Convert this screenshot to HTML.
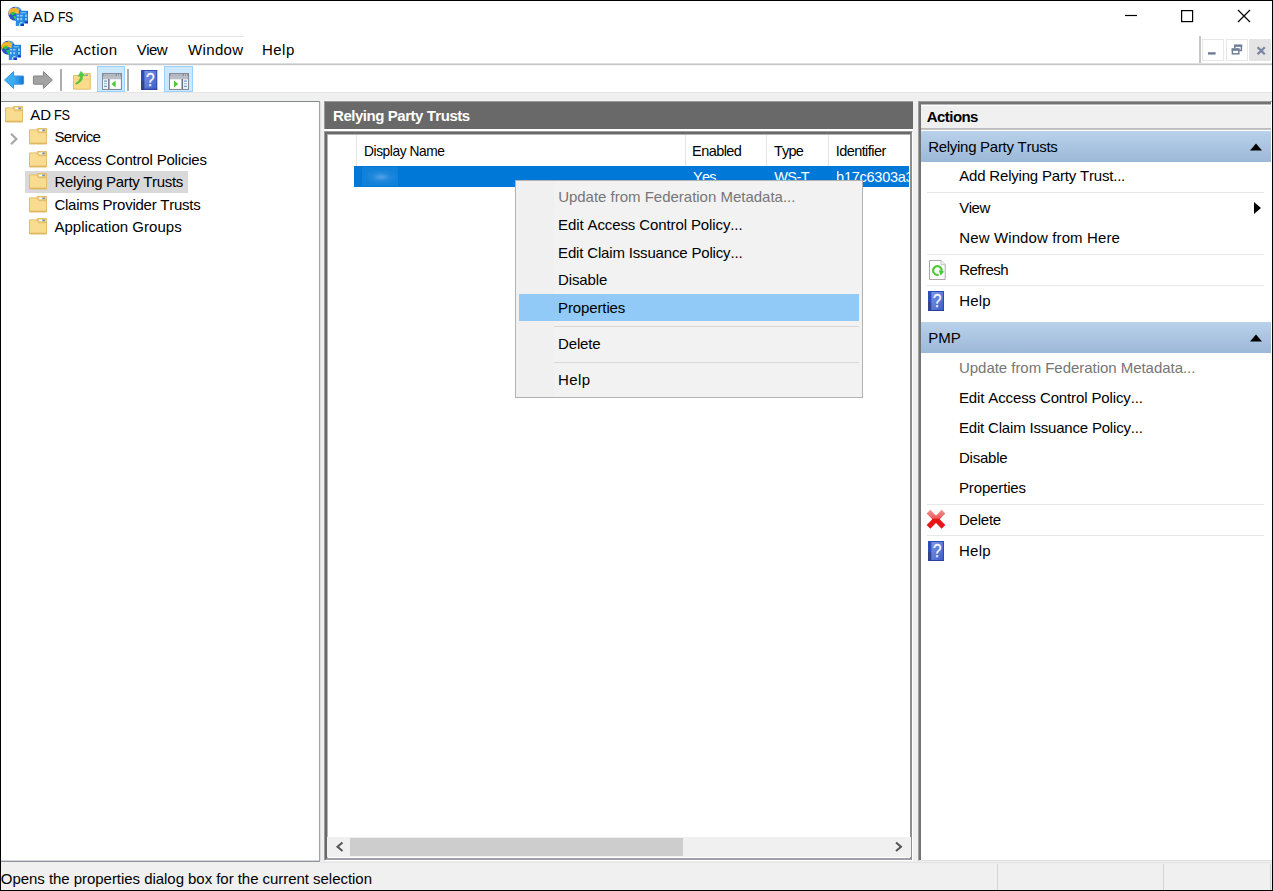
<!DOCTYPE html>
<html lang="en"><head><meta charset="utf-8"><title>AD FS</title>
<style>
html,body{margin:0;padding:0}
body{width:1273px;height:891px;position:relative;overflow:hidden;background:#fff;font-family:"Liberation Sans",sans-serif;}
.r{position:absolute}
.t{position:absolute;white-space:pre;line-height:20px;color:#000;font-kerning:none}
svg{position:absolute;overflow:visible}
</style></head>
<body>
<div class="r" style="left:0px;top:0px;width:1273px;height:891px;background:#fff;"></div>
<span class="t" style="left:32.77px;top:7px;font-size:15px;letter-spacing:0.610px;">AD <span style="display:inline-block;letter-spacing:-0.45px;margin-left:-1.61px;transform:scaleX(0.8155);transform-origin:0 0;">FS</span></span>
<svg style="left:1120px;top:5px" width="140" height="24" viewBox="1120 5 140 24"><path d="M1125 15.5H1137" stroke="#000" stroke-width="1.2" fill="none"/><rect x="1181.6" y="10.6" width="11" height="11" stroke="#000" stroke-width="1.2" fill="none"/><path d="M1238 10L1250 22M1250 10L1238 22" stroke="#000" stroke-width="1.2" fill="none"/></svg>
<div class="r" style="left:1px;top:36px;width:243px;height:1px;background:#e6e6e6;"></div>
<span class="t" style="left:29.47px;top:40px;font-size:15px;letter-spacing:-0.058px;">File</span>
<span class="t" style="left:73.17px;top:40px;font-size:15px;letter-spacing:0.443px;">Action</span>
<span class="t" style="left:136.83px;top:40px;font-size:15px;letter-spacing:-0.594px;">View</span>
<span class="t" style="left:187.93px;top:40px;font-size:15px;letter-spacing:0.376px;">Window</span>
<span class="t" style="left:262.07px;top:40px;font-size:15px;letter-spacing:0.437px;">Help</span>
<div class="r" style="left:1199px;top:36px;width:2px;height:28px;background:#c6c6c6;"></div>
<div class="r" style="left:1202px;top:39px;width:22px;height:22px;background:#fff;box-sizing:border-box;border:1px solid #e8e8e8"></div>
<div class="r" style="left:1226px;top:39px;width:22px;height:22px;background:#fff;box-sizing:border-box;border:1px solid #e8e8e8"></div>
<div class="r" style="left:1249px;top:39px;width:22px;height:22px;background:#e4e4e4;"></div>
<svg style="left:1200px;top:37px" width="72" height="26" viewBox="1200 37 72 26"><path d="M1208 53.4H1215.6" stroke="#6f7d99" stroke-width="2.4" fill="none"/><path d="M1234.8 48V45.6H1241.4V50.6H1239.4" stroke="#6f7d99" stroke-width="1.5" fill="none"/><path d="M1234 45.7H1242.2" stroke="#6f7d99" stroke-width="2.2" fill="none"/><rect x="1232.4" y="49.2" width="6.4" height="4.6" stroke="#6f7d99" stroke-width="1.5" fill="#fff"/><path d="M1231.7 49.6H1239.5" stroke="#6f7d99" stroke-width="2.4"/><path d="M1257.6 47.2L1264.8 54.2M1264.8 47.2L1257.6 54.2" stroke="#7685a3" stroke-width="2.3" fill="none"/></svg>
<div class="r" style="left:1px;top:63px;width:1271px;height:1px;background:#dedede;"></div>
<div class="r" style="left:1px;top:64px;width:1271px;height:1px;background:#c6c6c6;"></div>
<div class="r" style="left:1px;top:65px;width:1271px;height:1px;background:#f4f4f4;"></div>
<div class="r" style="left:97px;top:66px;width:28px;height:26px;background:#cce8ff;box-sizing:border-box;border:1px solid #99d1ff"></div>
<div class="r" style="left:164px;top:66px;width:29px;height:26px;background:#cce8ff;box-sizing:border-box;border:1px solid #99d1ff"></div>
<div class="r" style="left:60px;top:69px;width:2px;height:22px;background:#adadad;"></div>
<div class="r" style="left:127px;top:69px;width:2px;height:22px;background:#adadad;"></div>
<div class="r" style="left:1px;top:92px;width:1271px;height:10px;background:#f0f0f0;"></div>
<div class="r" style="left:1px;top:92px;width:1271px;height:1px;background:#e6e6e6;"></div>
<div class="r" style="left:320px;top:101px;width:5px;height:790px;background:#f0f0f0;"></div>
<div class="r" style="left:1px;top:101px;width:319px;height:761px;background:#fff;box-sizing:border-box;border-top:1px solid #828790;border-right:1px solid #a0a3a8;border-bottom:1px solid #8e9299"></div>
<div class="r" style="left:320px;top:102px;width:1px;height:760px;background:#dcdde0;"></div>
<div class="r" style="left:1px;top:860px;width:318px;height:1px;background:#d4d6da;"></div>
<div class="r" style="left:25px;top:171px;width:163px;height:22px;background:#d9d9d9;"></div>
<span class="t" style="left:30.17px;top:105px;font-size:15px;letter-spacing:0.110px;">AD <span style="display:inline-block;letter-spacing:-0.45px;margin-left:-1.55px;transform:scaleX(0.8513);transform-origin:0 0;">FS</span></span>
<span class="t" style="left:54.40px;top:127px;font-size:15px;letter-spacing:-0.575px;">Service</span>
<span class="t" style="left:54.40px;top:150px;font-size:15px;letter-spacing:-0.186px;">Access Control Policies</span>
<span class="t" style="left:54.40px;top:172px;font-size:15px;letter-spacing:-0.321px;">Relying Party Trusts</span>
<span class="t" style="left:54.40px;top:195px;font-size:15px;letter-spacing:-0.255px;">Claims Provider Trusts</span>
<span class="t" style="left:54.40px;top:217px;font-size:15px;letter-spacing:0.036px;">Application Groups</span>
<div class="r" style="left:324px;top:101px;width:590px;height:760px;background:#f0f0f0;"></div>
<div class="r" style="left:324px;top:101px;width:590px;height:28px;background:#696969;border-top:1px solid #9a9a9a;border-left:1px solid #9a9a9a;box-sizing:border-box"></div>
<span class="t" style="left:333.00px;top:106px;font-size:15px;letter-spacing:-0.456px;font-weight:bold;color:#fff;">Relying Party Trusts</span>
<div class="r" style="left:324px;top:129px;width:590px;height:2px;background:#fff;"></div>
<div class="r" style="left:324px;top:131px;width:589px;height:730px;background:#fff;box-sizing:border-box;border-top:1px solid #9c9c9c;border-left:1px solid #9c9c9c;border-right:1px solid #fff;border-bottom:1px solid #fff"></div>
<div class="r" style="left:325px;top:132px;width:587px;height:728px;background:#fff;box-sizing:border-box;border-top:2px solid #696969;border-left:2px solid #696969;border-right:2px solid #8e8e8e;border-bottom:2px solid #a0a0a8"></div>
<div class="r" style="left:327px;top:134px;width:583px;height:1px;background:#b4b4b4;"></div>
<div class="r" style="left:327px;top:134px;width:1px;height:724px;background:#b4b4b4;"></div>
<div class="r" style="left:356px;top:135px;width:1px;height:31px;background:#e5e5e5;"></div>
<div class="r" style="left:685px;top:135px;width:1px;height:31px;background:#e5e5e5;"></div>
<div class="r" style="left:766px;top:135px;width:1px;height:31px;background:#e5e5e5;"></div>
<div class="r" style="left:828px;top:135px;width:1px;height:31px;background:#e5e5e5;"></div>
<span class="t" style="left:363.57px;top:141px;font-size:14.5px;letter-spacing:-0.450px;transform:scaleX(0.9489);transform-origin:0 0;">Display Name</span>
<span class="t" style="left:692.11px;top:141px;font-size:14.5px;letter-spacing:-0.565px;">Enabled</span>
<span class="t" style="left:773.97px;top:141px;font-size:14.5px;letter-spacing:-0.789px;">Type</span>
<span class="t" style="left:835.66px;top:141px;font-size:14.5px;letter-spacing:-0.559px;">Identifier</span>
<div class="r" style="left:354px;top:166px;width:555px;height:21px;background:#0078d7;"></div>
<div class="r" style="left:362px;top:167px;width:36px;height:19px;background:radial-gradient(ellipse 17px 8px at 19px 10px,rgba(110,175,235,0.75) 0%,rgba(60,150,225,0.5) 55%,rgba(40,140,222,0.42) 100%)"></div>
<span class="t" style="left:692.98px;top:167px;font-size:14.5px;letter-spacing:-0.722px;color:#fff;">Yes</span>
<span class="t" style="left:774.24px;top:167px;font-size:14.5px;letter-spacing:-0.549px;color:#fff;">WS-T</span>
<div class="r" style="left:837px;top:166px;width:72px;height:21px;overflow:hidden">
<span class="t" style="left:-0.93px;top:1px;font-size:14.5px;letter-spacing:-0.251px;color:#fff;">b17c6303a3</span>
</div>
<div class="r" style="left:327px;top:837px;width:584px;height:20px;background:#f0f0f0;"></div>
<div class="r" style="left:350px;top:838px;width:333px;height:18px;background:#cdcdcd;"></div>
<svg style="left:330px;top:838px" width="580" height="18" viewBox="330 838 580 18"><path d="M342.5 842.5L337.5 846.7L342.5 851" stroke="#555" stroke-width="2" fill="none"/><path d="M896 842.5L901 846.7L896 851" stroke="#555" stroke-width="2" fill="none"/></svg>
<div class="r" style="left:913px;top:101px;width:5px;height:790px;background:#f0f0f0;"></div>
<div class="r" style="left:918px;top:101px;width:354px;height:760px;background:#fff;box-sizing:border-box;border-top:1px solid #a0a0a0;border-left:1px solid #a0a0a0;border-bottom:1px solid #e0e0e0"></div>
<div class="r" style="left:919px;top:102px;width:352px;height:758px;background:#fff;box-sizing:border-box;border-top:2px solid #737373;border-left:2px solid #737373"></div>
<div class="r" style="left:921px;top:104px;width:350px;height:1px;background:#b9b9b9;"></div>
<div class="r" style="left:921px;top:105px;width:350px;height:1px;background:#fff;"></div>
<div class="r" style="left:921px;top:106px;width:350px;height:22px;background:#f0f0f0;"></div>
<div class="r" style="left:921px;top:128px;width:350px;height:1px;background:#bcbcbc;"></div>
<div class="r" style="left:921px;top:129px;width:350px;height:1px;background:#c4c4c4;"></div>
<div class="r" style="left:921px;top:130px;width:350px;height:1px;background:#fff;"></div>
<span class="t" style="left:926.83px;top:107px;font-size:15px;letter-spacing:-0.569px;font-weight:bold;">Actions</span>
<div class="r" style="left:921px;top:131px;width:350px;height:31px;background:linear-gradient(#b9d1ea,#9cb8d8);"></div>
<span class="t" style="left:928.17px;top:137px;font-size:15px;letter-spacing:-0.282px;">Relying Party Trusts</span>
<svg style="left:1250px;top:142.7px" width="12" height="7.4" viewBox="0 0 12 7.4"><path d="M0 7.4L6 0.4L12 7.4Z" fill="#000"/></svg>
<div class="r" style="left:921px;top:322px;width:350px;height:31px;background:linear-gradient(#b9d1ea,#9cb8d8);"></div>
<span class="t" style="left:928.17px;top:328px;font-size:15px;letter-spacing:0.058px;">PMP</span>
<svg style="left:1250px;top:333.7px" width="12" height="7.4" viewBox="0 0 12 7.4"><path d="M0 7.4L6 0.4L12 7.4Z" fill="#000"/></svg>
<span class="t" style="left:959.30px;top:166px;font-size:15px;letter-spacing:-0.197px;">Add Relying Party Trust...</span>
<span class="t" style="left:959.30px;top:198px;font-size:15px;letter-spacing:-0.516px;">View</span>
<span class="t" style="left:959.30px;top:228px;font-size:15px;letter-spacing:0.116px;">New Window from Here</span>
<span class="t" style="left:959.30px;top:260px;font-size:15px;letter-spacing:-0.558px;">Refresh</span>
<span class="t" style="left:959.30px;top:291px;font-size:15px;letter-spacing:0.160px;">Help</span>
<div class="r" style="left:927px;top:192px;width:337px;height:1px;background:#e8e8e8;"></div>
<div class="r" style="left:927px;top:254px;width:337px;height:1px;background:#e8e8e8;"></div>
<div class="r" style="left:927px;top:285px;width:337px;height:1px;background:#e8e8e8;"></div>
<span class="t" style="left:959.00px;top:358px;font-size:15px;letter-spacing:-0.038px;color:#767676;">Update from Federation Metadata...</span>
<span class="t" style="left:959.00px;top:388px;font-size:15px;letter-spacing:-0.132px;">Edit Access Control Policy...</span>
<span class="t" style="left:959.00px;top:418px;font-size:15px;letter-spacing:-0.192px;">Edit Claim Issuance Policy...</span>
<span class="t" style="left:959.00px;top:448px;font-size:15px;letter-spacing:-0.226px;">Disable</span>
<span class="t" style="left:959.00px;top:478px;font-size:15px;letter-spacing:-0.147px;">Properties</span>
<span class="t" style="left:959.00px;top:510px;font-size:15px;letter-spacing:-0.239px;">Delete</span>
<span class="t" style="left:959.00px;top:541px;font-size:15px;letter-spacing:0.260px;">Help</span>
<div class="r" style="left:927px;top:504px;width:337px;height:1px;background:#e8e8e8;"></div>
<div class="r" style="left:927px;top:535px;width:337px;height:1px;background:#e8e8e8;"></div>
<svg style="left:1254px;top:201.8px" width="7" height="12" viewBox="0 0 7 12"><path d="M0 0L7 6L0 12Z" fill="#000"/></svg>
<div class="r" style="left:515px;top:180px;width:348px;height:218px;background:#f2f2f2;box-sizing:border-box;border:1px solid #b2b2b2"></div>
<div class="r" style="left:516px;top:181px;width:38px;height:216px;background:#f0f0f0;"></div>
<div class="r" style="left:519px;top:294px;width:340px;height:27px;background:#91c9f7;"></div>
<div class="r" style="left:554px;top:326px;width:305px;height:1px;background:#d7d7d7;"></div>
<div class="r" style="left:554px;top:362px;width:305px;height:1px;background:#d7d7d7;"></div>
<span class="t" style="left:558.14px;top:187px;font-size:15px;letter-spacing:-0.012px;color:#767676;">Update from Federation Metadata...</span>
<span class="t" style="left:558.07px;top:215px;font-size:15px;letter-spacing:-0.109px;">Edit Access Control Policy...</span>
<span class="t" style="left:558.07px;top:243px;font-size:15px;letter-spacing:-0.169px;">Edit Claim Issuance Policy...</span>
<span class="t" style="left:558.07px;top:270px;font-size:15px;letter-spacing:-0.138px;">Disable</span>
<span class="t" style="left:558.07px;top:298px;font-size:15px;letter-spacing:-0.121px;">Properties</span>
<span class="t" style="left:558.07px;top:334px;font-size:15px;letter-spacing:-0.152px;">Delete</span>
<span class="t" style="left:558.07px;top:370px;font-size:15px;letter-spacing:0.404px;">Help</span>
<div class="r" style="left:320px;top:861px;width:952px;height:29px;background:#f0f0f0;"></div>
<div class="r" style="left:1px;top:862px;width:1271px;height:28px;background:#f0f0f0;"></div>
<div class="r" style="left:320px;top:862px;width:952px;height:1px;background:#e3e3e3;"></div>
<div class="r" style="left:997px;top:864px;width:1px;height:26px;background:#d4d4d4;"></div>
<div class="r" style="left:1163px;top:864px;width:1px;height:26px;background:#d4d4d4;"></div>
<div class="r" style="left:1270px;top:864px;width:1px;height:26px;background:#d4d4d4;"></div>
<span class="t" style="left:0.79px;top:869px;font-size:15px;letter-spacing:-0.042px;">Opens the properties dialog box for the current selection</span>
<svg style="left:8px;top:6px" width="20" height="20" viewBox="0 0 20 20" preserveAspectRatio="none"><circle cx="7.2" cy="7.8" r="7" fill="#2f55c4"/><path d="M7 1 Q11 0 13.5 3.5 L9.5 5.5 Q8 3.5 6 3.5Z" fill="#5fa3dc"/><path d="M3 5.5 L6.5 4.5 L7 8 L4.5 9.5 L2.5 8Z" fill="#27c542"/><path d="M5 10.5 L9 9.5 L10 15 L7.5 14.5Z" fill="#21cf40"/><path d="M0.5 8.5 Q0 1.5 6 2 L7 2.2 L7 0.8 L11 4.2 L10.5 8.6 L9 7 Q6 4.8 3.2 6.5 Q2 7.5 1.6 9Z" fill="#f3b32a"/><path d="M6 6.5 L10.5 3.5 L10.5 8.6 Z" fill="#f6bd3c"/><rect x="11" y="4.8" width="9" height="12.6" fill="#1d7fe0"/><rect x="7.8" y="7.8" width="8.2" height="12.2" fill="#2a8be4"/><rect x="9" y="9.3" width="2" height="1" fill="#c9ecfb"/><rect x="12" y="9.3" width="2.6" height="1" fill="#c9ecfb"/><rect x="9" y="12" width="1.6" height="2.2" fill="#b5e4f8"/><rect x="12.3" y="12" width="1.6" height="2.2" fill="#9fd6f4"/><rect x="12.5" y="6.3" width="5.5" height="1" fill="#8fd0f4"/><rect x="17" y="8.5" width="1.8" height="2.4" fill="#8fd0f4"/><rect x="17" y="12" width="1.8" height="2.4" fill="#8fd0f4"/><path d="M11 20 Q11 16.3 14.5 16.3" stroke="#bfe6f7" stroke-width="1" fill="none"/><rect x="13" y="18" width="3" height="2" fill="#2238c0"/><rect x="17" y="15.3" width="3" height="2" fill="#2238c0"/></svg>
<svg style="left:1px;top:40px" width="20" height="20" viewBox="0 0 20 20" preserveAspectRatio="none"><circle cx="7.2" cy="7.8" r="7" fill="#2f55c4"/><path d="M7 1 Q11 0 13.5 3.5 L9.5 5.5 Q8 3.5 6 3.5Z" fill="#5fa3dc"/><path d="M3 5.5 L6.5 4.5 L7 8 L4.5 9.5 L2.5 8Z" fill="#27c542"/><path d="M5 10.5 L9 9.5 L10 15 L7.5 14.5Z" fill="#21cf40"/><path d="M0.5 8.5 Q0 1.5 6 2 L7 2.2 L7 0.8 L11 4.2 L10.5 8.6 L9 7 Q6 4.8 3.2 6.5 Q2 7.5 1.6 9Z" fill="#f3b32a"/><path d="M6 6.5 L10.5 3.5 L10.5 8.6 Z" fill="#f6bd3c"/><rect x="11" y="4.8" width="9" height="12.6" fill="#1d7fe0"/><rect x="7.8" y="7.8" width="8.2" height="12.2" fill="#2a8be4"/><rect x="9" y="9.3" width="2" height="1" fill="#c9ecfb"/><rect x="12" y="9.3" width="2.6" height="1" fill="#c9ecfb"/><rect x="9" y="12" width="1.6" height="2.2" fill="#b5e4f8"/><rect x="12.3" y="12" width="1.6" height="2.2" fill="#9fd6f4"/><rect x="12.5" y="6.3" width="5.5" height="1" fill="#8fd0f4"/><rect x="17" y="8.5" width="1.8" height="2.4" fill="#8fd0f4"/><rect x="17" y="12" width="1.8" height="2.4" fill="#8fd0f4"/><path d="M11 20 Q11 16.3 14.5 16.3" stroke="#bfe6f7" stroke-width="1" fill="none"/><rect x="13" y="18" width="3" height="2" fill="#2238c0"/><rect x="17" y="15.3" width="3" height="2" fill="#2238c0"/></svg>
<svg style="left:4px;top:71.4px" width="20" height="18" viewBox="0 0 20 18" preserveAspectRatio="none"><defs><linearGradient id="bag" x1="0" y1="0" x2="1" y2="0"><stop offset="0" stop-color="#45b4f3"/><stop offset="0.55" stop-color="#3aa9ef"/><stop offset="1" stop-color="#1273da"/></linearGradient></defs><path d="M0.6 9 L9.6 0.6 V5 H19 Q19.6 5 19.6 5.8 V12.4 Q19.6 13.2 19 13.2 H9.6 V17.4Z" fill="url(#bag)" stroke="#3a93dd" stroke-width="1" stroke-linejoin="round"/></svg>
<svg style="left:33px;top:71.4px" width="20" height="18" viewBox="0 0 20 18" preserveAspectRatio="none"><path d="M19.4 9 L10.4 0.6 V5 H1 Q0.4 5 0.4 5.8 V12.4 Q0.4 13.2 1 13.2 H10.4 V17.4Z" fill="#a3a3a3" stroke="#838383" stroke-width="1" stroke-linejoin="round"/></svg>
<svg style="left:73px;top:71px" width="18" height="19" viewBox="0 0 18 19" preserveAspectRatio="none"><path d="M0.5 4.5H10L11 2.6H17.3V18.2H0.5Z" fill="#fadb8c" stroke="#e3bf6e" stroke-width="1"/><rect x="12.3" y="3.6" width="2.6" height="1.2" fill="#4a8fe0"/><path d="M1 8.3H17" stroke="#f3cd78" stroke-width="0.8"/><path d="M2.4 12.4 Q7.2 10.2 7.6 5 L5.2 5.2 L8 0.4 L11.6 4.6 L9.6 4.8 Q9.8 11 3.2 13.2Z" fill="#4fcb3c" stroke="#46b935" stroke-width="0.6"/></svg>
<svg style="left:102px;top:73px" width="20" height="17" viewBox="0 0 20 17" preserveAspectRatio="none"><rect x="0.5" y="0.5" width="19" height="16" fill="#c9ccd3" stroke="#858a96" stroke-width="1"/><rect x="1" y="1" width="18" height="2.2" fill="#8a8f9b"/><rect x="1.6" y="1.5" width="12" height="0.9" fill="#e6e8ec"/><rect x="15" y="1.4" width="1.2" height="1.2" fill="#e6e8ec"/><rect x="17" y="1.4" width="1.2" height="1.2" fill="#e6e8ec"/><rect x="1" y="3.4" width="18" height="2.6" fill="#b9bdc7"/><rect x="1" y="6.4" width="5" height="9.4" fill="#f4f4f6"/><rect x="6.2" y="6" width="1.4" height="10" fill="#6c7486"/><rect x="7.8" y="6.4" width="11" height="9.4" fill="#fff"/><rect x="2" y="7.6" width="3" height="1" fill="#3d8bd6"/><rect x="2" y="10.2" width="3" height="1" fill="#8db4dc"/><rect x="2" y="12.8" width="3" height="1" fill="#3d8bd6"/><path d="M9.4 10.9 L13.6 7.4 V14.4Z" fill="#4fc53c"/></svg>
<svg style="left:140.6px;top:69.8px" width="16.3" height="19.8" viewBox="0 0 16 20" preserveAspectRatio="none"><defs><linearGradient id="hg140.669.8" x1="0" y1="0" x2="1" y2="1"><stop offset="0" stop-color="#7f95e6"/><stop offset="1" stop-color="#3d5fc9"/></linearGradient></defs><rect x="0" y="0" width="16" height="20" fill="#2c4cb8"/><rect x="0" y="11" width="3.4" height="9" fill="#34448c"/><rect x="3.4" y="1" width="11.6" height="18" fill="url(#hg140.669.8)"/><rect x="0" y="19" width="16" height="1" fill="#2a3f96"/><text transform="translate(9.1 16.2) scale(0.8 1)" text-anchor="middle" font-family="Liberation Sans, sans-serif" font-size="19" fill="#f4f7ff" stroke="#f4f7ff" stroke-width="0.35">?</text></svg>
<svg style="left:169px;top:73px" width="20" height="17" viewBox="0 0 20 17" preserveAspectRatio="none"><rect x="0.5" y="0.5" width="19" height="16" fill="#c9ccd3" stroke="#858a96" stroke-width="1"/><rect x="1" y="1" width="18" height="2.2" fill="#8a8f9b"/><rect x="1.6" y="1.5" width="12" height="0.9" fill="#e6e8ec"/><rect x="15" y="1.4" width="1.2" height="1.2" fill="#e6e8ec"/><rect x="17" y="1.4" width="1.2" height="1.2" fill="#e6e8ec"/><rect x="1" y="3.4" width="18" height="2.6" fill="#b9bdc7"/><rect x="1" y="6.4" width="11.4" height="9.4" fill="#fff"/><rect x="12.6" y="6" width="1.4" height="10" fill="#6c7486"/><rect x="14.2" y="6.4" width="4.8" height="9.4" fill="#f4f4f6"/><rect x="15" y="7.6" width="3" height="1" fill="#3d8bd6"/><rect x="15" y="10.2" width="3" height="1" fill="#8db4dc"/><rect x="15" y="12.8" width="3" height="1" fill="#3d8bd6"/><path d="M9.2 10.9 L5 7.4 V14.4Z" fill="#4fc53c"/></svg>
<svg style="left:5px;top:106px" width="18" height="17" viewBox="0 0 18 17" preserveAspectRatio="none"><path d="M0.5 1.9H8.2L9.6 4.6H17.5V16H0.5Z" fill="#f9dc8f" stroke="#e2bd6b" stroke-width="1"/><path d="M8.3 0.5H17.5V4.6H9.6L8.3 2.2Z" fill="#f3cf7a" stroke="#e2bd6b" stroke-width="1"/><rect x="10.2" y="1.6" width="3.4" height="1.6" fill="#fff"/><rect x="13.4" y="1.6" width="2.3" height="1.6" fill="#4a8fe0"/><path d="M1.2 15.2H17" stroke="#d8ae58" stroke-width="1"/></svg>
<svg style="left:29px;top:128.3px" width="18" height="17" viewBox="0 0 18 17" preserveAspectRatio="none"><path d="M0.5 1.9H8.2L9.6 4.6H17.5V16H0.5Z" fill="#f9dc8f" stroke="#e2bd6b" stroke-width="1"/><path d="M8.3 0.5H17.5V4.6H9.6L8.3 2.2Z" fill="#f3cf7a" stroke="#e2bd6b" stroke-width="1"/><rect x="10.2" y="1.6" width="3.4" height="1.6" fill="#fff"/><rect x="13.4" y="1.6" width="2.3" height="1.6" fill="#4a8fe0"/><path d="M1.2 15.2H17" stroke="#d8ae58" stroke-width="1"/></svg>
<svg style="left:29px;top:150.8px" width="18" height="17" viewBox="0 0 18 17" preserveAspectRatio="none"><path d="M0.5 1.9H8.2L9.6 4.6H17.5V16H0.5Z" fill="#f9dc8f" stroke="#e2bd6b" stroke-width="1"/><path d="M8.3 0.5H17.5V4.6H9.6L8.3 2.2Z" fill="#f3cf7a" stroke="#e2bd6b" stroke-width="1"/><rect x="10.2" y="1.6" width="3.4" height="1.6" fill="#fff"/><rect x="13.4" y="1.6" width="2.3" height="1.6" fill="#4a8fe0"/><path d="M1.2 15.2H17" stroke="#d8ae58" stroke-width="1"/></svg>
<svg style="left:29px;top:173.3px" width="18" height="17" viewBox="0 0 18 17" preserveAspectRatio="none"><path d="M0.5 1.9H8.2L9.6 4.6H17.5V16H0.5Z" fill="#f9dc8f" stroke="#e2bd6b" stroke-width="1"/><path d="M8.3 0.5H17.5V4.6H9.6L8.3 2.2Z" fill="#f3cf7a" stroke="#e2bd6b" stroke-width="1"/><rect x="10.2" y="1.6" width="3.4" height="1.6" fill="#fff"/><rect x="13.4" y="1.6" width="2.3" height="1.6" fill="#4a8fe0"/><path d="M1.2 15.2H17" stroke="#d8ae58" stroke-width="1"/></svg>
<svg style="left:29px;top:195.8px" width="18" height="17" viewBox="0 0 18 17" preserveAspectRatio="none"><path d="M0.5 1.9H8.2L9.6 4.6H17.5V16H0.5Z" fill="#f9dc8f" stroke="#e2bd6b" stroke-width="1"/><path d="M8.3 0.5H17.5V4.6H9.6L8.3 2.2Z" fill="#f3cf7a" stroke="#e2bd6b" stroke-width="1"/><rect x="10.2" y="1.6" width="3.4" height="1.6" fill="#fff"/><rect x="13.4" y="1.6" width="2.3" height="1.6" fill="#4a8fe0"/><path d="M1.2 15.2H17" stroke="#d8ae58" stroke-width="1"/></svg>
<svg style="left:29px;top:218.3px" width="18" height="17" viewBox="0 0 18 17" preserveAspectRatio="none"><path d="M0.5 1.9H8.2L9.6 4.6H17.5V16H0.5Z" fill="#f9dc8f" stroke="#e2bd6b" stroke-width="1"/><path d="M8.3 0.5H17.5V4.6H9.6L8.3 2.2Z" fill="#f3cf7a" stroke="#e2bd6b" stroke-width="1"/><rect x="10.2" y="1.6" width="3.4" height="1.6" fill="#fff"/><rect x="13.4" y="1.6" width="2.3" height="1.6" fill="#4a8fe0"/><path d="M1.2 15.2H17" stroke="#d8ae58" stroke-width="1"/></svg>
<svg style="left:9px;top:132px" width="10" height="14" viewBox="0 0 10 14"><path d="M2 1.8L7.4 7L2 12.2" stroke="#a6a6a6" stroke-width="2.2" fill="none"/></svg>
<svg style="left:929px;top:260px" width="17" height="20" viewBox="0 0 17 20" preserveAspectRatio="none"><path d="M0.5 0.5H12L16.2 4.7V19.5H0.5Z" fill="#fff" stroke="#a9a9a9" stroke-width="1"/><path d="M12 0.5V4.7H16.2" fill="#f2f2f2" stroke="#b8b8b8" stroke-width="0.8"/><path d="M12.6 11.2 A4.3 4.3 0 1 0 9.6 14.6" fill="none" stroke="#55c83c" stroke-width="2.3"/><path d="M9.8 10.2 L15.2 11.6 L11.6 15.4Z" fill="#3fc83a"/></svg>
<svg style="left:928px;top:291px" width="16" height="20" viewBox="0 0 16 20" preserveAspectRatio="none"><defs><linearGradient id="hg928291" x1="0" y1="0" x2="1" y2="1"><stop offset="0" stop-color="#7f95e6"/><stop offset="1" stop-color="#3d5fc9"/></linearGradient></defs><rect x="0" y="0" width="16" height="20" fill="#2c4cb8"/><rect x="0" y="11" width="3.4" height="9" fill="#34448c"/><rect x="3.4" y="1" width="11.6" height="18" fill="url(#hg928291)"/><rect x="0" y="19" width="16" height="1" fill="#2a3f96"/><text transform="translate(9.1 16.2) scale(0.8 1)" text-anchor="middle" font-family="Liberation Sans, sans-serif" font-size="19" fill="#f4f7ff" stroke="#f4f7ff" stroke-width="0.35">?</text></svg>
<svg style="left:926.2px;top:509px" width="20.6" height="20.6" viewBox="0 0 20 20" preserveAspectRatio="none"><defs><linearGradient id="dg" x1="0" y1="0" x2="0" y2="1"><stop offset="0" stop-color="#f08a8a"/><stop offset="0.42" stop-color="#ee5a5a"/><stop offset="0.5" stop-color="#e91313"/><stop offset="1" stop-color="#e21a1a"/></linearGradient></defs><path d="M2.4 2.6 L17 17.4 M17 2.6 L2.4 17.4" stroke="url(#dg)" stroke-width="5" stroke-linecap="butt" stroke-linejoin="round" fill="none"/></svg>
<svg style="left:928px;top:541px" width="16" height="20" viewBox="0 0 16 20" preserveAspectRatio="none"><defs><linearGradient id="hg928541" x1="0" y1="0" x2="1" y2="1"><stop offset="0" stop-color="#7f95e6"/><stop offset="1" stop-color="#3d5fc9"/></linearGradient></defs><rect x="0" y="0" width="16" height="20" fill="#2c4cb8"/><rect x="0" y="11" width="3.4" height="9" fill="#34448c"/><rect x="3.4" y="1" width="11.6" height="18" fill="url(#hg928541)"/><rect x="0" y="19" width="16" height="1" fill="#2a3f96"/><text transform="translate(9.1 16.2) scale(0.8 1)" text-anchor="middle" font-family="Liberation Sans, sans-serif" font-size="19" fill="#f4f7ff" stroke="#f4f7ff" stroke-width="0.35">?</text></svg>
<div class="r" style="left:0px;top:0px;width:1273px;height:1px;background:#000;"></div>
<div class="r" style="left:0px;top:890px;width:1273px;height:1px;background:#000;"></div>
<div class="r" style="left:0px;top:0px;width:1px;height:891px;background:#000;"></div>
<div class="r" style="left:1272px;top:0px;width:1px;height:891px;background:#000;"></div>
</body></html>
